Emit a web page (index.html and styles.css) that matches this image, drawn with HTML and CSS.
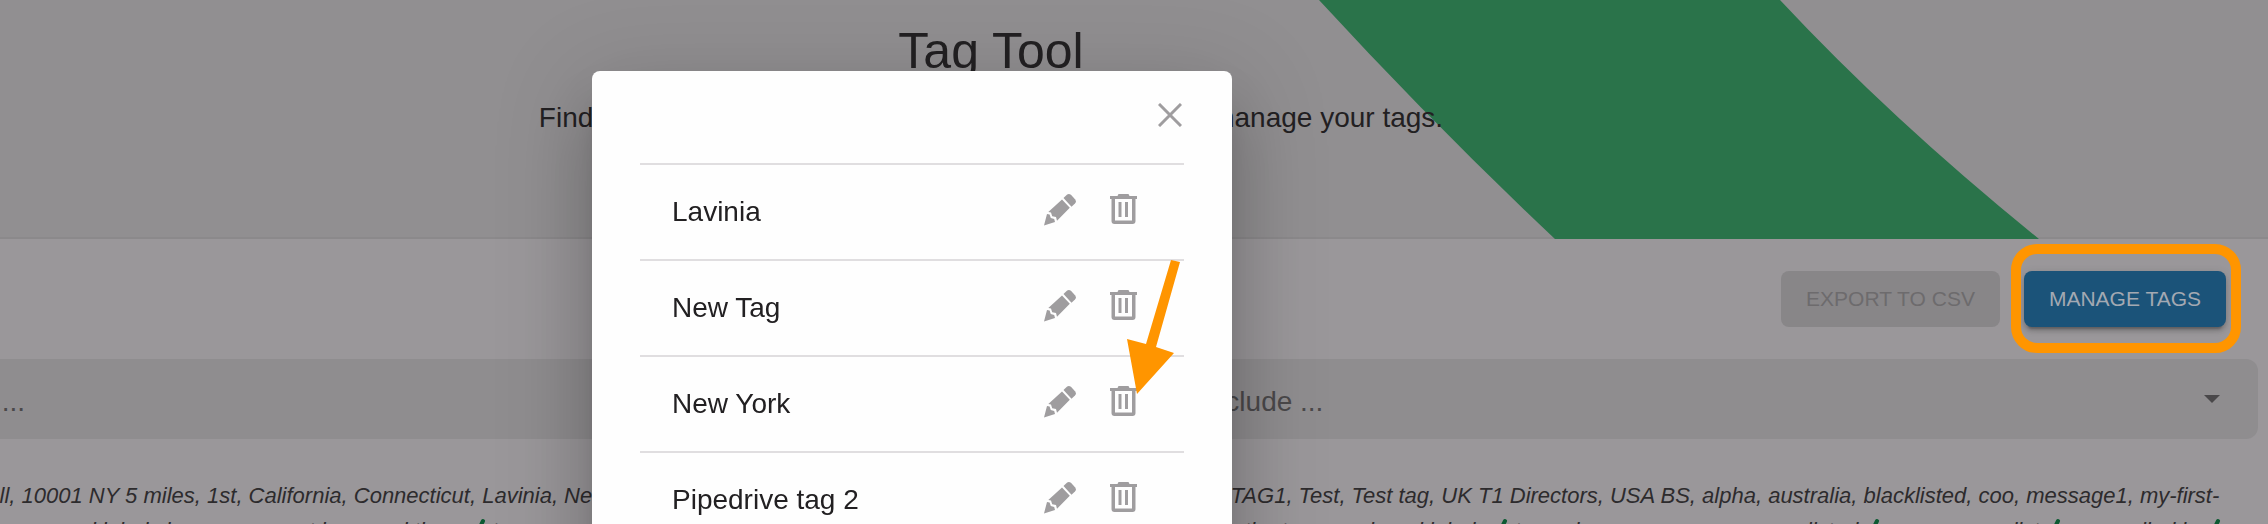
FILE: index.html
```html
<!doctype html>
<html lang="en">
<head>
  <meta charset="utf-8">
  <title>Tag Tool</title>
  <link rel="stylesheet" href="styles.css">
</head>
<body>
  <svg class="sprite" aria-hidden="true">
    <symbol id="pencil" viewBox="0 0 32 32">
      <path d="M19.5 4 22.6 1Q24.8-.8 27.2 1L31 5.2Q32.8 7.600 31 9.600L27.500 12.800Z"/>
      <path d="M18 5.500 25.800 13.800 13 26.800 12 23 8.200 22.200 7 18.600 4.300 18Z"/>
      <path d="M3 20 5.600 20.400 6.800 24 10.200 25 11 28 0 31.500Z"/>
    </symbol>
    <symbol id="trash" viewBox="0 0 28 32">
      <path d="M8.500 0H18.500L19.500 2H27V5H25.500V27Q25.500 30 22.500 30H4.500Q1.500 30 1.500 27V5H0V2H7.500ZM5 5V26.500H22V5Z" fill-rule="evenodd"/>
      <path d="M8.500 8H11.500V23H8.500ZM15 8H18V23H15Z"/>
    </symbol>
    <symbol id="check" viewBox="0 0 16 20">
      <path d="M2 11 6 17 13 3" fill="none" stroke="#0c5a32" stroke-width="4" stroke-linecap="round"/>
    </symbol>
  </svg>

  <div class="page">
    <header class="hero">
      <svg class="stripe" viewBox="0 0 720 239"><path d="M0 0H461Q573 120 720 239H236Q114 124 0 0Z"/></svg>
      <h1>Tag Tool</h1>
      <p class="intro">Find your contacts by tags, export them to a CSV and manage your tags.</p>
    </header>

    <div class="toolbar">
      <button class="btn" disabled>EXPORT TO CSV</button>
      <div class="highlight">
        <button class="btn primary">MANAGE TAGS</button>
      </div>
    </div>

    <div class="filters">
      <div class="field">
        <select aria-label="Tags to include"><option>Tags to also include ...</option></select>
      </div>
      <div class="field">
        <select aria-label="Tags to exclude"><option>Tags you can exclude ...</option></select>
        <svg class="caret" viewBox="0 0 16 8"><path d="M0 0H16L8 8Z"/></svg>
      </div>
    </div>

    <p class="tags">All of your supported tags: All, 10001 NY 5 miles, 1st, California, Connecticut, Lavinia, New Tag, New York, Pipedrive tag 2, Region North, Sales, Startups, TAG1, Test, Test tag, UK T1 Directors, USA BS, alpha, australia, blacklisted, coo, message1, my-first-<wbr>team, my-tag, 6 sets. Remove unused labels in your account here and there <svg class="check"><use href="#check"/></svg> to see more on the list of rows, or you manage here, each colleague can see the tags, assigned labels <svg class="check"><use href="#check"/></svg> to each rep, company or user listed <svg class="check"><use href="#check"/></svg> on your own list <svg class="check"><use href="#check"/></svg> as enrolled in <svg class="check"><use href="#check"/></svg></p>
  </div>

  <div class="overlay">
    <div class="modal" role="dialog" aria-label="Manage tags">
      <div class="modal-head">
        <button class="icon-btn close" aria-label="Close">
          <svg viewBox="0 0 24 24"><path d="M1 1 23 23M23 1 1 23"/></svg>
        </button>
      </div>
      <ul class="tag-list">
        <li>
          <span class="name">Lavinia</span>
          <button class="icon-btn" aria-label="Edit"><svg class="pencil"><use href="#pencil"/></svg></button>
          <button class="icon-btn" aria-label="Delete"><svg class="trash"><use href="#trash"/></svg></button>
        </li>
        <li>
          <span class="name">New Tag</span>
          <button class="icon-btn" aria-label="Edit"><svg class="pencil"><use href="#pencil"/></svg></button>
          <button class="icon-btn" aria-label="Delete"><svg class="trash"><use href="#trash"/></svg></button>
        </li>
        <li>
          <span class="name">New York</span>
          <button class="icon-btn" aria-label="Edit"><svg class="pencil"><use href="#pencil"/></svg></button>
          <button class="icon-btn" aria-label="Delete"><svg class="trash"><use href="#trash"/></svg></button>
        </li>
        <li>
          <span class="name">Pipedrive tag 2</span>
          <button class="icon-btn" aria-label="Edit"><svg class="pencil"><use href="#pencil"/></svg></button>
          <button class="icon-btn" aria-label="Delete"><svg class="trash"><use href="#trash"/></svg></button>
        </li>
      </ul>
      <svg class="arrow" viewBox="0 0 54 134"><path d="M44 0 53 2 29 87 47 93 10 134 0 79 19 84Z"/></svg>
    </div>
  </div>
</body>
</html>
```
FILE: styles.css
```css
* { box-sizing: border-box; }
html { overflow: hidden; }
body {
  margin: 0;
  height: 100vh;
  overflow: hidden;
  background: #9a979a;
  color: #222022;
  font-family: "Liberation Sans", Arial, sans-serif;
  font-size: 28px;
}
button, select { font-family: inherit; border: 0; }
.sprite { display: none; }

/* the page is scrolled sideways under the dialog */
.page {
  height: 100vh;
  margin-left: -276px;
  overflow: hidden;
}

.hero {
  position: relative;
  padding: 21px 10px 99px 0;
  background: #918f91;
  border-bottom: 2px solid #8b898b;
  text-align: center;
}
.stripe {
  position: absolute;
  top: 0;
  right: 229px;
  width: 720px;
  height: 239px;
  fill: #2a734a;
}
h1 {
  position: relative;
  margin: 0 0 17px;
  font-size: 50px;
  font-weight: normal;
  line-height: 60px;
}
.intro {
  position: relative;
  margin: 0;
  line-height: 40px;
}

.toolbar {
  display: flex;
  justify-content: flex-end;
  gap: 24px;
  padding: 32px 42px 32px 0;
}
.btn {
  height: 56px;
  padding: 0 25px;
  border-radius: 8px;
  background: #888688;
  color: #6d6b6d;
  font-size: 21px;
}
.primary {
  background: #1b5379;
  color: #a3a9b2;
  box-shadow: 0 6px 2px -4px rgba(0,0,0,.2), 0 4px 4px rgba(0,0,0,.14), 0 2px 10px rgba(0,0,0,.12);
}
.highlight { position: relative; height: 56px; display: flex; }
.highlight::after {
  content: "";
  position: absolute;
  inset: -27px -15px -26px -13px;
  border: 10px solid #ff9500;
  border-radius: 26px;
  pointer-events: none;
}

.filters {
  display: grid;
  grid-template-columns: 1fr 1fr;
  gap: 16px;
  padding-right: 10px;
}
.field { position: relative; height: 80px; }
.field select {
  appearance: none;
  width: 100%;
  height: 80px;
  padding: 4px 24px 0;
  border-radius: 12px;
  background: #8f8d8f;
  color: #4a484a;
  font-size: 28px;
}
.caret {
  position: absolute;
  top: 36px;
  right: 38px;
  width: 16px;
  height: 8px;
  fill: #4a484a;
}

.tags {
  margin: 39px 10px 0 0;
  color: #2d2b2d;
  font-size: 22px;
  font-style: italic;
  line-height: 35px;
}
.check { width: 16px; height: 20px; }

.overlay {
  position: fixed;
  inset: 0;
  display: flex;
  justify-content: center;
  align-items: flex-start;
  padding: 71px 444px 0 0;
  overflow: hidden;
}
.modal {
  position: relative;
  width: 640px;
  padding: 0 48px 48px;
  border-radius: 8px;
  background: #fefefe;
  box-shadow: 0 22px 30px -14px rgba(0,0,0,.2), 0 48px 76px 6px rgba(0,0,0,.14), 0 18px 92px 16px rgba(0,0,0,.12);
}
.modal-head {
  display: flex;
  justify-content: flex-end;
  height: 92px;
  padding: 12px 0 0;
  margin-right: -18px;
}
.icon-btn {
  display: flex;
  align-items: center;
  justify-content: center;
  width: 64px;
  height: 64px;
  padding: 0;
  background: none;
  fill: #9f9d9f;
}
.close svg { width: 24px; height: 24px; stroke: #9f9d9f; stroke-width: 3; }
.tag-list { margin: 0; padding: 0; list-style: none; }
.tag-list li {
  display: flex;
  align-items: center;
  height: 96px;
  padding: 0 28px 0 32px;
  border-top: 2px solid #e0dee0;
}
.tag-list .icon-btn { padding-bottom: 4px; }
.name { flex: 1; }
.pencil { width: 32px; height: 32px; }
.trash { width: 28px; height: 32px; }
.arrow {
  position: absolute;
  top: 189px;
  left: 535px;
  width: 54px;
  height: 134px;
  fill: #ff9500;
}
```
